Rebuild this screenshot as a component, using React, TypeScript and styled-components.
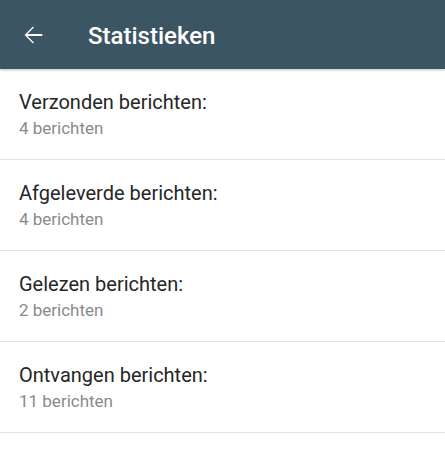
import styled, { createGlobalStyle } from "styled-components"

const GlobalStyle = createGlobalStyle`
    html, body {
        margin: 0;
        padding: 0;
        background: #ffffff;
    }
    body {
        font-family: Roboto, "Noto Sans", sans-serif;
    }
`

const stats = [
    { label: "Verzonden berichten:", value: "4 berichten" },
    { label: "Afgeleverde berichten:", value: "4 berichten" },
    { label: "Gelezen berichten:", value: "2 berichten" },
    { label: "Ontvangen berichten:", value: "11 berichten" },
]

function App() {
    return (
        <Page>
            <GlobalStyle />
            <Toolbar>
                <BackButton aria-label="Terug">
                    <svg width="28" height="28" viewBox="0 0 24 24" fill="#ffffff">
                        <path d="M20 11.2H7.2l5.6-5.6L12 4.8 4.8 12l7.2 7.2.8-.8-5.6-5.6H20v-1.6z" />
                    </svg>
                </BackButton>
                <Title>Statistieken</Title>
            </Toolbar>

            <List>
                {stats.map((s) => (
                    <Item key={s.label}>
                        <Label>{s.label}</Label>
                        <Value>{s.value}</Value>
                    </Item>
                ))}
            </List>
        </Page>
    )
}

const Page = styled.div`
    width: 445px;
    height: 464px;
    background: #ffffff;
    overflow: hidden;
`

const Toolbar = styled.div`
    height: 69px;
    box-sizing: border-box;
    padding-top: 3px;
    background-color: #3c5562;
    display: flex;
    align-items: center;
    box-shadow: 0 1px 3px rgba(0, 0, 0, 0.25);
    position: relative;
    z-index: 1;
`

const BackButton = styled.div`
    width: 28px;
    height: 28px;
    margin-left: 19px;
    margin-right: 41px;
    margin-top: -3px;
    display: flex;
`

const Title = styled.h1`
    margin: 0;
    font-size: 24px;
    font-weight: 500;
    color: #ffffff;
`

const List = styled.div`
    display: flex;
    flex-direction: column;
`

const Item = styled.div`
    box-sizing: border-box;
    height: 91px;
    padding: 0 19px;
    display: flex;
    flex-direction: column;
    justify-content: center;
    border-bottom: 1px solid #e2e2e2;
`

const Label = styled.div`
    font-size: 20px;
    color: #262626;
    line-height: 24px;
`

const Value = styled.div`
    margin-top: 4px;
    font-size: 17px;
    color: #8a8a8a;
    line-height: 20px;
`

export default App
